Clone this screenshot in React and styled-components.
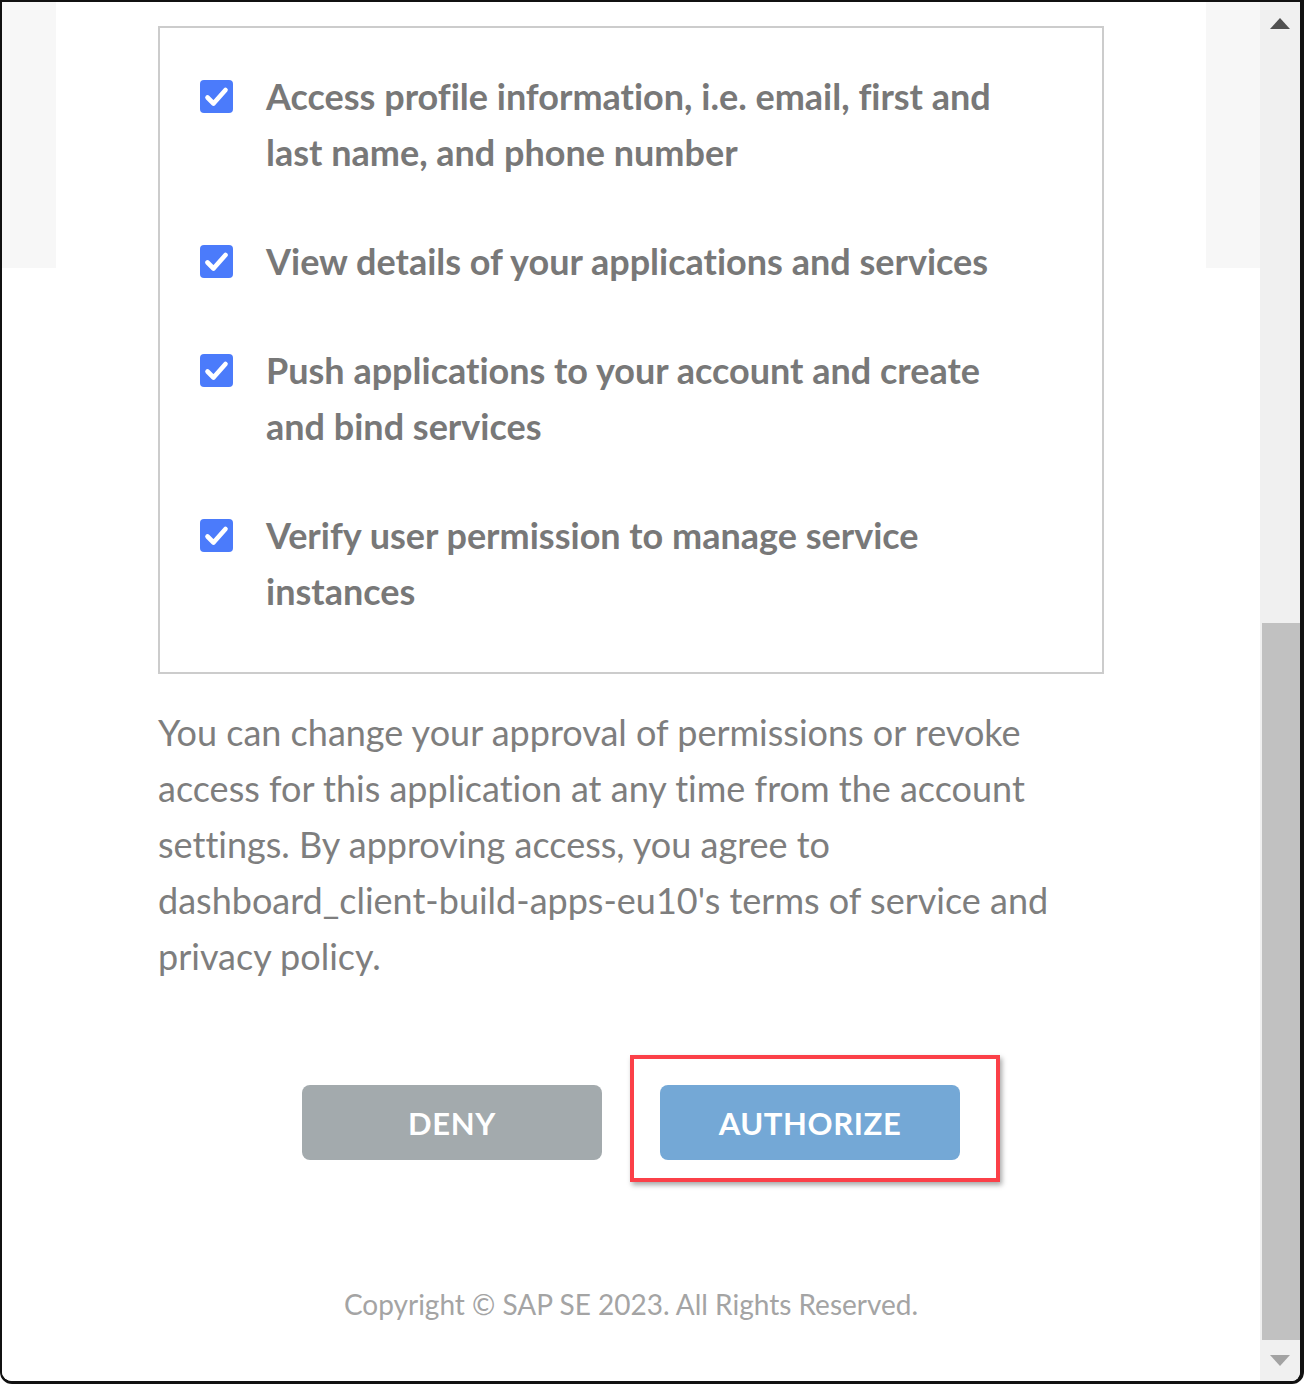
import React from 'react'
import styled, { createGlobalStyle } from 'styled-components'

const GlobalStyle = createGlobalStyle`
  html, body {
    margin: 0;
    padding: 0;
    background: #ffffff;
  }
  body {
    font-family: Lato, "Noto Sans", "Liberation Sans", sans-serif;
    font-variant-ligatures: none;
  }
`

/* fenetre avec le cadre noir */
const Frame = styled.div`
  box-sizing: border-box;
  width: 1304px;
  height: 1384px;
  display: flex;
  border-style: solid;
  border-color: #111;
  border-width: 2px 4px 3px 2px;
  border-radius: 0 0 12px 12px;
  overflow: hidden;
  background: #fff;
`

const Page = styled.div`
  flex: 1;
  display: flex;
  justify-content: center;
  background: linear-gradient(#f7f7f7, #f7f7f7) top / 100% 266px no-repeat, #ffffff;
`

const Card = styled.main`
  width: 1150px;
  box-sizing: border-box;
  background: #fff;
  padding: 24px 102px 0;
  display: flex;
  flex-direction: column;
`

const Scopes = styled.ul`
  list-style: none;
  margin: 0;
  padding: 40px 60px 53px 40px;
  border: 2px solid #cccccc;
  display: flex;
  flex-direction: column;
  gap: 53px;
`

const Scope = styled.li`
  display: flex;
  align-items: flex-start;
  gap: 33px;
`

const Check = styled.span`
  flex: none;
  width: 33px;
  height: 33px;
  margin-top: 12px;
  border-radius: 4px;
  background: #4b7bfb;
  display: flex;
`

const ScopeText = styled.span`
  font-size: 36px;
  line-height: 56px;
  font-weight: 700;
  color: #787878;
  max-width: 755px;
`

const Notice = styled.p`
  margin: 30px 0 0;
  font-size: 36px;
  line-height: 56px;
  color: #7e7e7e;
`

const Actions = styled.div`
  display: flex;
  justify-content: center;
  gap: 58px;
  margin-top: 101px;
`

const Button = styled.button`
  position: relative;
  width: 300px;
  height: 75px;
  border: none;
  border-radius: 8px;
  background: ${(props) => (props.primary ? '#74a8d6' : '#a3aaad')};
  color: #fff;
  font-family: inherit;
  font-size: 31px;
  font-weight: 700;
  letter-spacing: 0.6px;
  cursor: pointer;
`

/* cadre rouge d'annotation autour du bouton */
const Highlight = styled.span`
  position: absolute;
  top: -30px;
  left: -30px;
  right: -40px;
  bottom: -22px;
  border: 4px solid #fb4048;
  box-shadow: 2px 3px 5px rgba(0, 0, 0, 0.35);
  pointer-events: none;
`

const Footer = styled.footer`
  margin-top: 127px;
  text-align: center;
  font-size: 28px;
  color: #a4a4a4;
`

const Scrollbar = styled.div`
  width: 40px;
  flex: none;
  background: #f0f0f0;
  display: flex;
  flex-direction: column;
  align-items: center;
`

const Arrow = styled.div`
  width: 0;
  height: 0;
  border-left: 10px solid transparent;
  border-right: 10px solid transparent;
  ${(props) =>
    props.down
      ? `border-top: 11px solid #a3a3a3; margin-top: auto; margin-bottom: 15px;`
      : `border-bottom: 11px solid #505050; margin-top: 16px;`}
`

const Thumb = styled.div`
  align-self: flex-end;
  width: 38px;
  height: 717px;
  margin-top: 594px;
  background: #c1c1c1;
`

const scopes = [
  'Access profile information, i.e. email, first and last name, and phone number',
  'View details of your applications and services',
  'Push applications to your account and create and bind services',
  'Verify user permission to manage service instances',
]

const CheckIcon = () => (
  <svg width="33" height="33" viewBox="0 0 33 33">
    <path d="M7.5 17.5 L13.5 23.5 L25.5 10" fill="none" stroke="#fff" strokeWidth="4.6" strokeLinecap="round" strokeLinejoin="round" />
  </svg>
)

const App = () => {
  return (
    <>
      <GlobalStyle />
      <Frame>
        <Page>
          <Card>
            <Scopes>
              {scopes.map((s) => (
                <Scope key={s}>
                  <Check><CheckIcon /></Check>
                  <ScopeText>{s}</ScopeText>
                </Scope>
              ))}
            </Scopes>
            <Notice>
              You can change your approval of permissions or revoke access for this application at any time from the account settings. By approving access, you agree to dashboard_client-build-apps-eu10's terms of service and privacy policy.
            </Notice>
            <Actions>
              <Button>DENY</Button>
              <Button primary>
                AUTHORIZE
                <Highlight />
              </Button>
            </Actions>
            <Footer>Copyright © SAP SE 2023. All Rights Reserved.</Footer>
          </Card>
        </Page>
        <Scrollbar>
          <Arrow />
          <Thumb />
          <Arrow down />
        </Scrollbar>
      </Frame>
    </>
  )
}

export default App
